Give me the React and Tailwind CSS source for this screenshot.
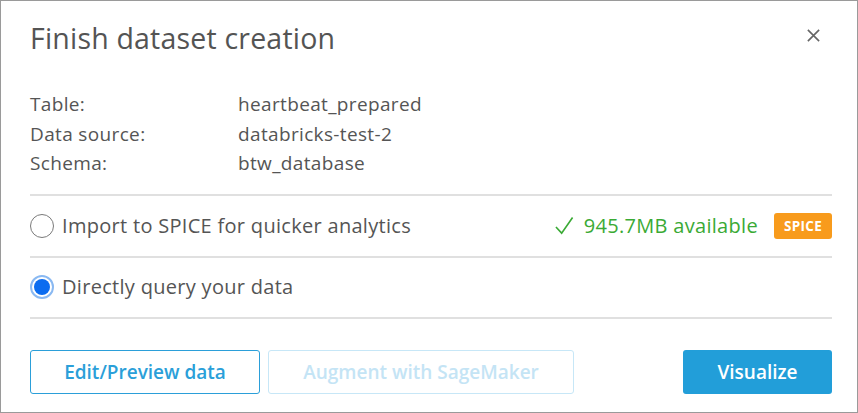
import React, { useState } from 'react';

const rows = [
  ['Table:', 'heartbeat_prepared'],
  ['Data source:', 'databricks-test-2'],
  ['Schema:', 'btw_database'],
];

const Radio = ({ checked }) =>
  checked ? (
    <span className="flex h-[24px] w-[24px] shrink-0 items-center justify-center rounded-full border-2 border-[#8ab9f2]">
      <span className="h-[16px] w-[16px] rounded-full bg-[#0b6cf0]" />
    </span>
  ) : (
    <span className="h-[24px] w-[24px] shrink-0 rounded-full border-[1.5px] border-[#7a7a7a] bg-white" />
  );

const App = () => {
  const [mode, setMode] = useState('direct');

  return (
    <div className="h-[413px] w-[858px] bg-white font-['Open_Sans',sans-serif]">
      <div className="flex h-full flex-col border border-[#9a9a9a] pb-[18px] pl-[29px] pr-[25px]">
        <div className="flex h-[76px] items-center justify-between pb-[2px]">
          <h1 className="text-[28.5px] font-normal tracking-[0.2px] text-[#545454]">Finish dataset creation</h1>
          <button className="mr-[7px] mb-[5px] p-1 text-[#666]">
            <svg width="15" height="15" viewBox="0 0 16 16" stroke="currentColor" strokeWidth="1.7">
              <path d="M2 2 L14 14 M14 2 L2 14" />
            </svg>
          </button>
        </div>

        <div className="mt-[13px] flex flex-col text-[19px] leading-[29.5px] tracking-[0.35px] text-[#555]">
          {rows.map(([k, v]) => (
            <div key={k} className="flex">
              <span className="w-[208px]">{k}</span>
              <span>{v}</span>
            </div>
          ))}
        </div>

        <div className="mt-[15px] border-t-2 border-[#e0e0e0]" />

        <div
          className="flex h-[62px] cursor-pointer items-center gap-[8px] border-b-2 border-[#e0e0e0]"
          onClick={() => setMode('spice')}
        >
          <Radio checked={mode === 'spice'} />
          <span className="flex-1 text-[20px] tracking-[0.3px] text-[#555]">Import to SPICE for quicker analytics</span>
          <span className="flex items-center gap-[10px] text-[20px] tracking-[0.3px] text-[#3aaa35]">
            <svg width="19" height="19" viewBox="0 0 20 19" fill="none" stroke="currentColor" strokeWidth="1.7">
              <path d="M1 11 L7 17.5 L18.5 1" />
            </svg>
            945.7MB available
          </span>
          <span className="ml-[8px] rounded-[3px] bg-[#f89b1c] px-[10px] py-[4px] text-[13.5px] font-bold leading-[18px] tracking-[0.3px] text-white">
            SPICE
          </span>
        </div>

        <div
          className="flex h-[61px] cursor-pointer items-center gap-[8px] border-b-2 border-[#e0e0e0]"
          onClick={() => setMode('direct')}
        >
          <Radio checked={mode === 'direct'} />
          <span className="text-[20px] tracking-[0.3px] text-[#555]">Directly query your data</span>
        </div>

        <div className="mt-auto flex items-center">
          <button className="h-[44px] w-[230px] rounded-[3px] border-[1.5px] border-[#2b9fd9] text-[19px] font-semibold text-[#2b9fd9]">
            Edit/Preview data
          </button>
          <button className="ml-[8px] h-[44px] w-[306px] rounded-[3px] border-[1.5px] border-[#c7e7f7] text-[19px] font-semibold text-[#c4e4f5]">
            Augment with SageMaker
          </button>
          <button className="ml-auto h-[44px] w-[149px] rounded-[3px] bg-[#229ed9] text-[19px] font-semibold text-white">
            Visualize
          </button>
        </div>
      </div>
    </div>
  );
};

export default App;
